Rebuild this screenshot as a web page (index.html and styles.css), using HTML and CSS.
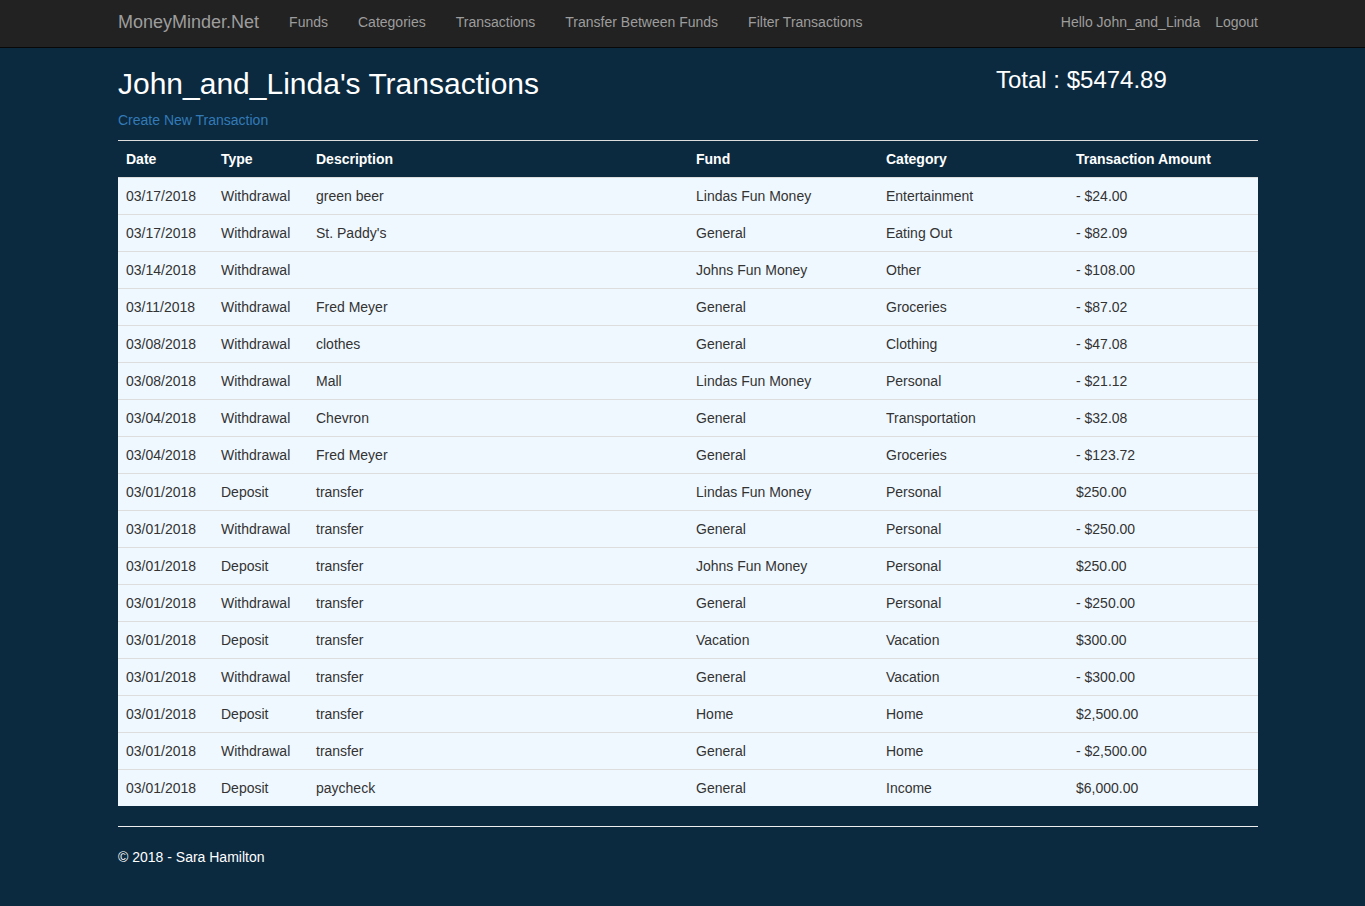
FILE: index.html
```html
<!DOCTYPE html>
<html>
<head>
<meta charset="utf-8">
<title>Transactions - MoneyMinder.Net</title>
<link rel="stylesheet" href="styles.css">
</head>
<body>
<nav class="navbar">
  <div class="container nav-inner">
    <a class="brand" href="#">MoneyMinder.Net</a>
    <ul class="nav-links">
      <li><a href="#">Funds</a></li>
      <li><a href="#">Categories</a></li>
      <li><a href="#">Transactions</a></li>
      <li><a href="#">Transfer Between Funds</a></li>
      <li><a href="#">Filter Transactions</a></li>
    </ul>
    <ul class="nav-right">
      <li><a href="#" class="hello">Hello John_and_Linda</a></li>
      <li><a href="#" class="last">Logout</a></li>
    </ul>
  </div>
</nav>
<main class="container">
  <div class="head-row">
    <div class="head-left">
      <h2 class="title">John_and_Linda's Transactions</h2>
      <p class="create"><a href="#">Create New Transaction</a></p>
    </div>
    <h3 class="total">Total : $5474.89</h3>
  </div>
  <hr class="top-rule">
  <table class="tx">
    <colgroup>
      <col class="c-date"><col class="c-type"><col class="c-desc"><col class="c-fund"><col class="c-cat"><col class="c-amt">
    </colgroup>
    <thead>
      <tr><th>Date</th><th>Type</th><th>Description</th><th>Fund</th><th>Category</th><th>Transaction Amount</th></tr>
    </thead>
    <tbody>
      <tr><td>03/17/2018</td><td>Withdrawal</td><td>green beer</td><td>Lindas Fun Money</td><td>Entertainment</td><td>- $24.00</td></tr>
      <tr><td>03/17/2018</td><td>Withdrawal</td><td>St. Paddy's</td><td>General</td><td>Eating Out</td><td>- $82.09</td></tr>
      <tr><td>03/14/2018</td><td>Withdrawal</td><td></td><td>Johns Fun Money</td><td>Other</td><td>- $108.00</td></tr>
      <tr><td>03/11/2018</td><td>Withdrawal</td><td>Fred Meyer</td><td>General</td><td>Groceries</td><td>- $87.02</td></tr>
      <tr><td>03/08/2018</td><td>Withdrawal</td><td>clothes</td><td>General</td><td>Clothing</td><td>- $47.08</td></tr>
      <tr><td>03/08/2018</td><td>Withdrawal</td><td>Mall</td><td>Lindas Fun Money</td><td>Personal</td><td>- $21.12</td></tr>
      <tr><td>03/04/2018</td><td>Withdrawal</td><td>Chevron</td><td>General</td><td>Transportation</td><td>- $32.08</td></tr>
      <tr><td>03/04/2018</td><td>Withdrawal</td><td>Fred Meyer</td><td>General</td><td>Groceries</td><td>- $123.72</td></tr>
      <tr><td>03/01/2018</td><td>Deposit</td><td>transfer</td><td>Lindas Fun Money</td><td>Personal</td><td>$250.00</td></tr>
      <tr><td>03/01/2018</td><td>Withdrawal</td><td>transfer</td><td>General</td><td>Personal</td><td>- $250.00</td></tr>
      <tr><td>03/01/2018</td><td>Deposit</td><td>transfer</td><td>Johns Fun Money</td><td>Personal</td><td>$250.00</td></tr>
      <tr><td>03/01/2018</td><td>Withdrawal</td><td>transfer</td><td>General</td><td>Personal</td><td>- $250.00</td></tr>
      <tr><td>03/01/2018</td><td>Deposit</td><td>transfer</td><td>Vacation</td><td>Vacation</td><td>$300.00</td></tr>
      <tr><td>03/01/2018</td><td>Withdrawal</td><td>transfer</td><td>General</td><td>Vacation</td><td>- $300.00</td></tr>
      <tr><td>03/01/2018</td><td>Deposit</td><td>transfer</td><td>Home</td><td>Home</td><td>$2,500.00</td></tr>
      <tr><td>03/01/2018</td><td>Withdrawal</td><td>transfer</td><td>General</td><td>Home</td><td>- $2,500.00</td></tr>
      <tr><td>03/01/2018</td><td>Deposit</td><td>paycheck</td><td>General</td><td>Income</td><td>$6,000.00</td></tr>
    </tbody>
  </table>
  <hr class="foot-rule">
  <footer class="footer">
    <p>&copy; 2018 - Sara Hamilton</p>
  </footer>
</main>
</body>
</html>
```

FILE: styles.css
```css
* { box-sizing: border-box; }
html, body { margin: 0; padding: 0; }
body {
  background: #0b2a3f;
  font-family: "Liberation Sans", Arial, Helvetica, sans-serif;
  font-size: 14px;
  line-height: 20px;
  color: #333;
}
a { text-decoration: none; }
.container {
  width: 1169px;
  margin: 0 auto;
  padding: 0 9px 0 20px;
}
.navbar {
  background: #222;
  border-bottom: 1px solid #080808;
  height: 48px;
}
.nav-inner {
  display: flex;
  align-items: flex-start;
  height: 47px;
  padding-top: 12px;
}
.brand {
  color: #9d9d9d;
  font-size: 18px;
  line-height: 20px;
  padding-right: 15px;
}
.nav-links, .nav-right {
  list-style: none;
  margin: 0;
  padding: 0;
  display: flex;
}
.nav-links a, .nav-right a {
  display: block;
  color: #9d9d9d;
  padding: 0 15px;
  line-height: 20px;
}
.nav-right { margin-left: auto; }
.nav-right a.hello { padding-right: 0; }
.nav-right a.last { padding-right: 0; }

.head-row {
  display: flex;
}
.head-left { width: 878px; flex-shrink: 0; }
.title {
  margin: 19px 0 10px;
  font-size: 30px;
  line-height: 33px;
  font-weight: normal;
  color: #fff;
}
.create { margin: 0; }
.create a { color: #337ab7; }
.total {
  margin: 19px 0 0;
  font-size: 24px;
  line-height: 26px;
  font-weight: normal;
  color: #fff;
  white-space: nowrap;
}
.top-rule {
  margin: 10px 0 0;
  border: 0;
  border-top: 1px solid #ddd;
  height: 0;
}
.tx {
  width: 1140px;
  border-collapse: collapse;
  table-layout: fixed;
}
.c-date, .c-type { width: 95px; }
.c-desc { width: 380px; }
.c-fund, .c-cat, .c-amt { width: 190px; }
.tx th {
  text-align: left;
  color: #fff;
  font-weight: bold;
  padding: 8px;
  line-height: 20px;
}
.tx td {
  background: #f0f8ff;
  border-top: 1px solid #ddd;
  padding: 8px;
  line-height: 20px;
  color: #333;
  white-space: nowrap;
}
.foot-rule {
  margin: 20px 0 20px;
  border: 0;
  border-top: 1px solid #eee;
  height: 0;
}
.footer p {
  margin: 0 0 10px;
  color: #fff;
}
```
